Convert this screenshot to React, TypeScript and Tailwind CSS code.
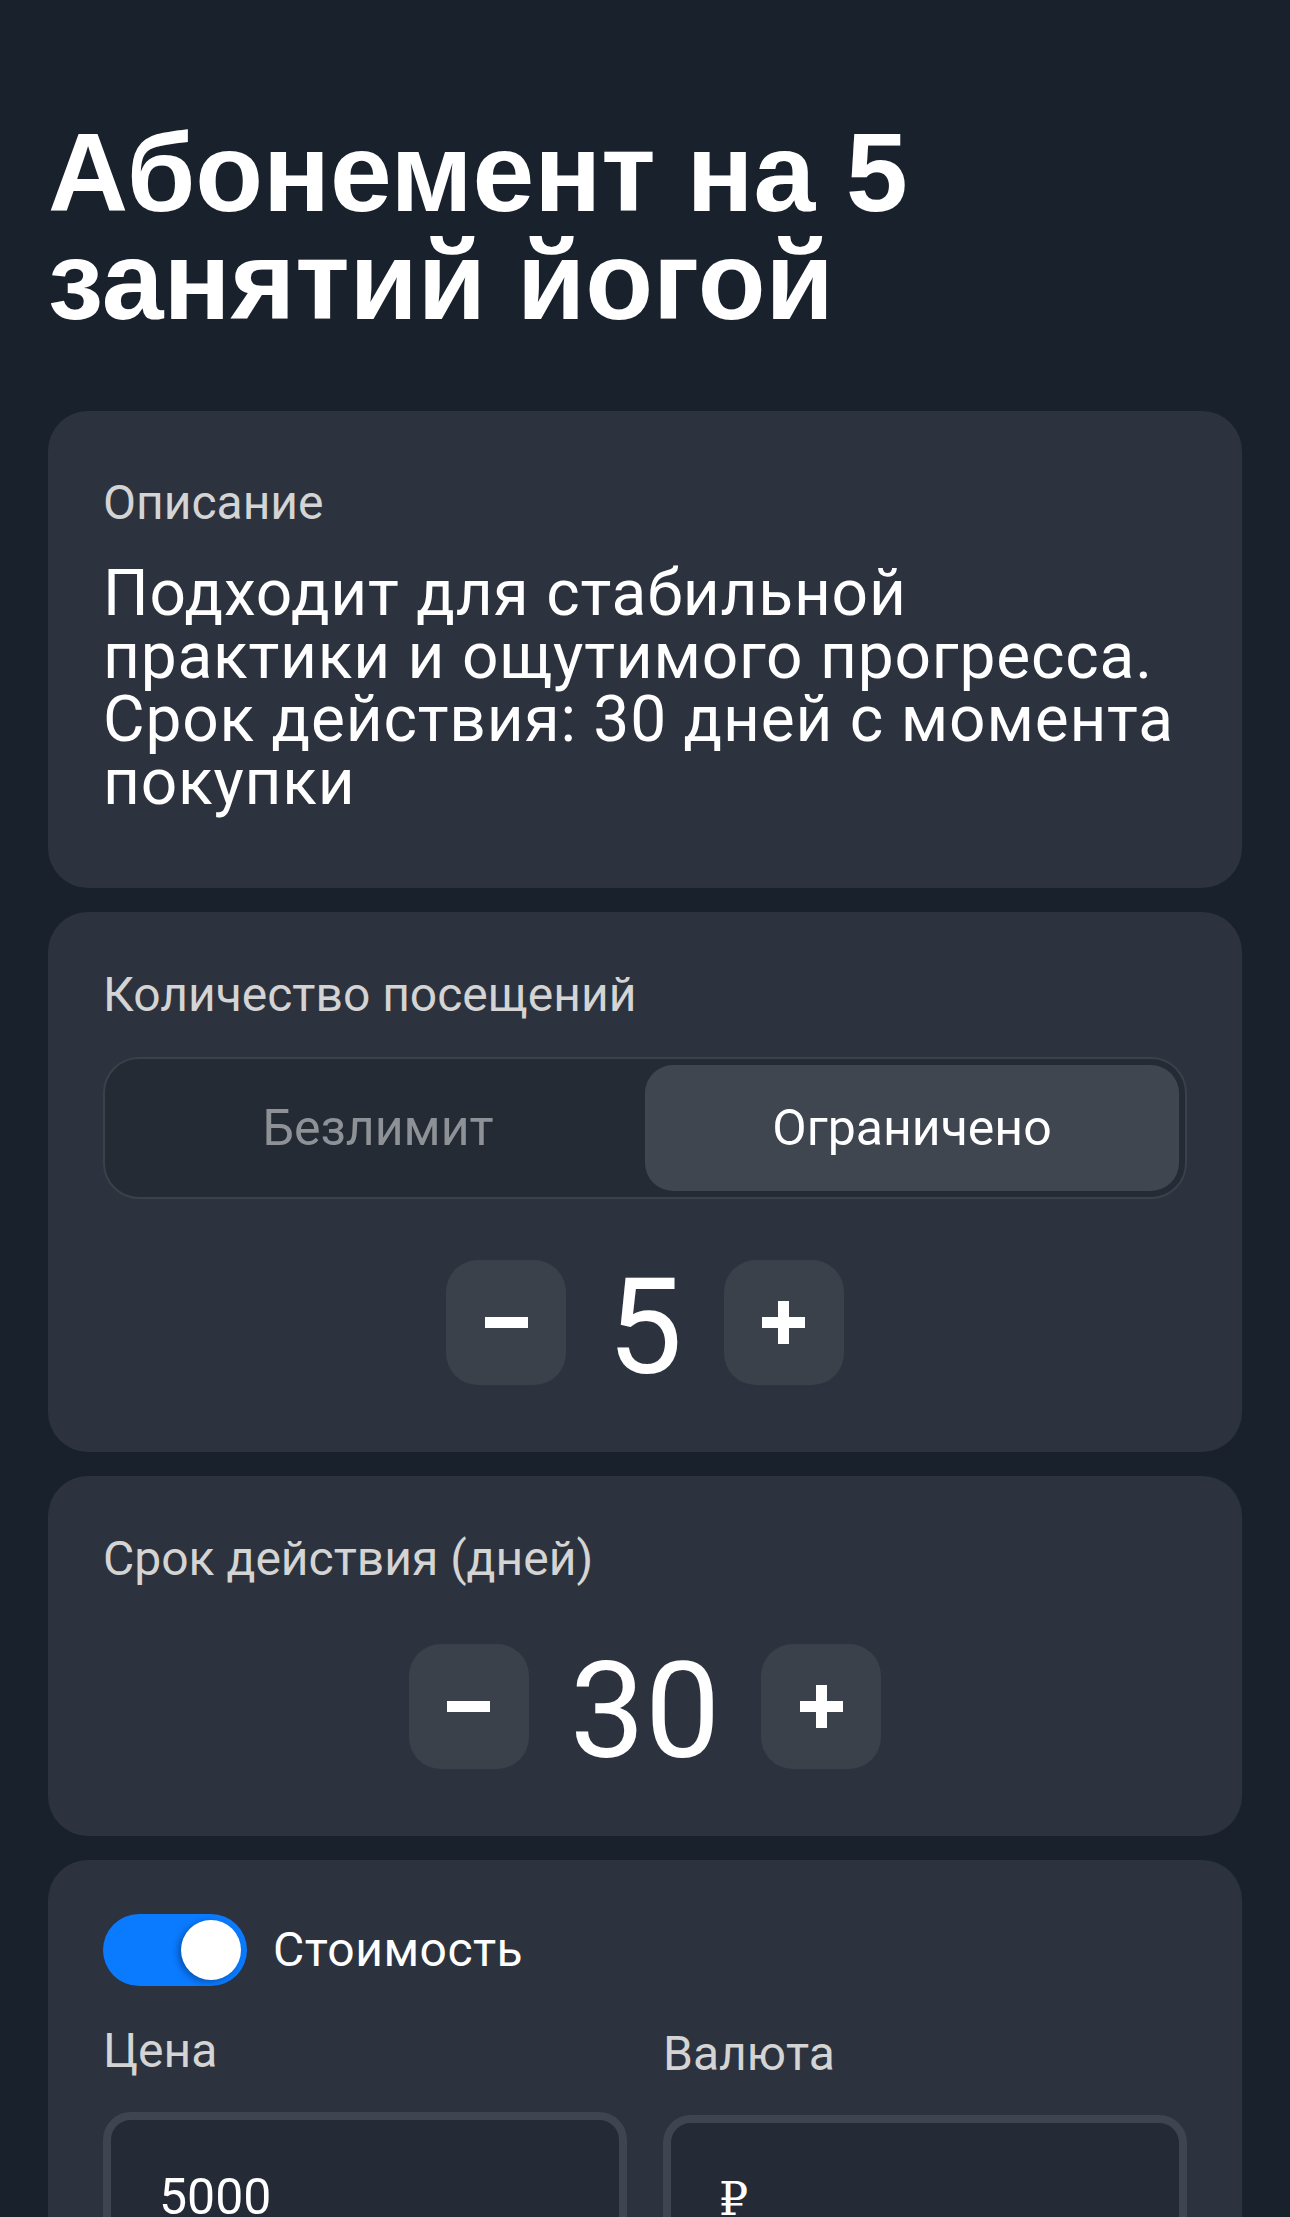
import { useState } from "react"

function MinusIcon() {
  return (
    <svg width="43" height="43" viewBox="0 0 43 43" fill="none">
      <path d="M0 21.5H43" stroke="white" strokeWidth="11" />
    </svg>
  )
}

function PlusIcon() {
  return (
    <svg width="43" height="43" viewBox="0 0 43 43" fill="none">
      <path d="M0 21.5H43M21.5 0V43" stroke="white" strokeWidth="11" />
    </svg>
  )
}

function Stepper({ value, onChange }: { value: number; onChange: (v: number) => void }) {
  return (
    <div className="flex h-[125px] items-start justify-center gap-[41px]">
      <button
        type="button"
        className="flex h-[125px] w-[120px] items-center justify-center rounded-[32px] bg-[#3b414b]"
        onClick={() => onChange(Math.max(1, value - 1))}
      >
        <MinusIcon />
      </button>
      <span className="mt-[11px] text-[134px] leading-[114px]">{value}</span>
      <button
        type="button"
        className="flex h-[125px] w-[120px] items-center justify-center rounded-[32px] bg-[#3b414b]"
        onClick={() => onChange(value + 1)}
      >
        <PlusIcon />
      </button>
    </div>
  )
}

export default function App() {
  const [limited, setLimited] = useState(true)
  const [visits, setVisits] = useState(5)
  const [days, setDays] = useState(30)
  const [paid, setPaid] = useState(true)

  return (
    <div className="h-[2217px] overflow-hidden bg-[#19222c] px-[48px] pt-[119px] font-['Roboto',sans-serif] text-white">
      <h1 className="font-['Liberation_Sans',Arial,sans-serif] text-[111px] font-bold leading-[108px]">
        Абонемент на 5 занятий йогой
      </h1>

      <div className="mt-[76px] flex flex-col gap-[24px]">
        {/* Описание */}
        <div className="rounded-[40px] bg-[#2c333e] px-[55px] pt-[64px] pb-[74px]">
          <div className="text-[48px] leading-[56px] text-[#d4d4d4]">Описание</div>
          <p className="mt-[31px] text-[64px] leading-[63px] tracking-[0.8px]">
            Подходит для стабильной практики и ощутимого прогресса. Срок действия: 30 дней с момента покупки
          </p>
        </div>

        {/* Количество посещений */}
        <div className="rounded-[40px] bg-[#2c333e] px-[55px] pt-[55px] pb-[67px]">
          <div className="text-[48px] leading-[56px] text-[#d4d4d4]">Количество посещений</div>
          <div className="mt-[34px] grid h-[142px] grid-cols-2 rounded-[36px] border-2 border-[#3a414b] bg-[#252b35] p-[6px]">
            <button
              type="button"
              onClick={() => setLimited(false)}
              className={
                limited
                  ? "rounded-[28px] text-[50px] text-[#8e9297]"
                  : "rounded-[28px] bg-[#3f4650] text-[50px] text-white"
              }
            >
              Безлимит
            </button>
            <button
              type="button"
              onClick={() => setLimited(true)}
              className={
                limited
                  ? "rounded-[28px] bg-[#3f4650] text-[50px] text-white"
                  : "rounded-[28px] text-[50px] text-[#8e9297]"
              }
            >
              Ограничено
            </button>
          </div>
          <div className="mt-[61px]">
            <Stepper value={visits} onChange={setVisits} />
          </div>
        </div>

        {/* Срок действия */}
        <div className="rounded-[40px] bg-[#2c333e] px-[55px] pt-[55px] pb-[67px]">
          <div className="text-[48px] leading-[56px] text-[#d4d4d4]">Срок действия (дней)</div>
          <div className="mt-[57px]">
            <Stepper value={days} onChange={setDays} />
          </div>
        </div>

        {/* Стоимость */}
        <div className="rounded-[40px] bg-[#2c333e] px-[55px] pt-[54px] pb-[60px]">
          <div className="flex items-center">
            <button
              type="button"
              onClick={() => setPaid(!paid)}
              className={
                paid
                  ? "flex h-[72px] w-[144px] justify-end rounded-full bg-[#0a7aff] p-[6px]"
                  : "flex h-[72px] w-[144px] justify-start rounded-full bg-[#4b525c] p-[6px]"
              }
            >
              <span className="h-[60px] w-[60px] rounded-full bg-white shadow-[-3px_2px_6px_rgba(0,0,0,0.3)]" />
            </button>
            <span className="ml-[26px] text-[48px] leading-[56px] tracking-[0.5px]">Стоимость</span>
          </div>

          <div className="mt-[37px] grid grid-cols-2 gap-[36px]">
            <div>
              <div className="text-[48px] leading-[56px] text-[#d4d4d4]">Цена</div>
              <input
                readOnly
                value="5000"
                className="mt-[33px] h-[169px] w-full rounded-[28px] border-[8px] border-[#3e4550] bg-[#252b36] px-[48px] text-[50px] text-white outline-none"
              />
            </div>
            <div className="pt-[3px]">
              <div className="text-[48px] leading-[56px] text-[#d4d4d4]">Валюта</div>
              <div className="mt-[33px] flex h-[169px] w-full items-center rounded-[28px] border-[8px] border-[#3e4550] bg-[#252b36] px-[48px] text-[50px]">
                <span className="font-['DejaVu_Serif',serif] text-[46px]">₽</span>
              </div>
            </div>
          </div>
        </div>
      </div>
    </div>
  )
}
